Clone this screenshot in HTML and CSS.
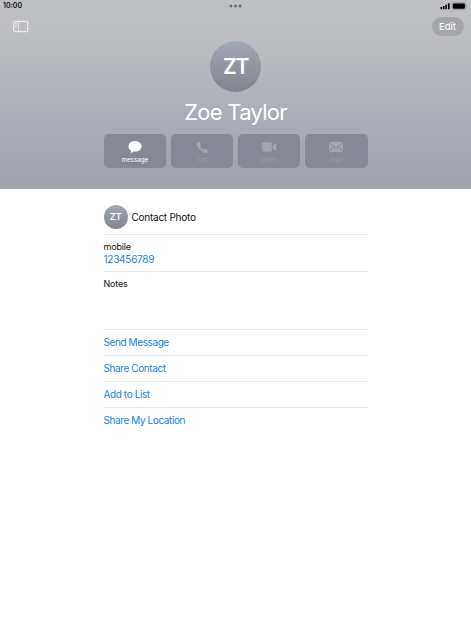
FILE: index.html
```html
<!DOCTYPE html>
<html lang="en">
<head>
  <meta charset="UTF-8" />
  <title>Zoe Taylor</title>
  <link rel="stylesheet" href="styles.css">
</head>
<body>

  <header class="header">
    <div class="status-bar">
      <span class="time">10:00</span>
      <svg class="dots" width="13" height="4" viewBox="0 0 13 4">
        <circle cx="2" cy="2" r="1.5" /><circle cx="6.5" cy="2" r="1.5" /><circle cx="11" cy="2" r="1.5" />
      </svg>
      <svg class="status-icons" width="28" height="8" viewBox="0 0 28 8">
        <path d="M.5 5h1.600v2.200H.5zM2.900 4h1.600v3.200H2.900zM5.300 2.700h1.600v4.500H5.300zM7.900 1.200h1.700v6H7.900z" />
        <rect x="12.2" y=".9" width="13.4" height="6.4" rx="1.8" fill="none" stroke="#77787c" stroke-width=".7" />
        <rect x="12.900" y="1.500" width="12" height="5.200" rx="1.1" />
        <path d="M26.3 3v2q.8-.3.8-1t-.8-1z" fill="#77787c" />
      </svg>
    </div>

    <div class="toolbar">
      <svg class="sidebar-icon" width="16" height="13" viewBox="0 0 16 13">
        <rect x=".8" y="1.300" width="14" height="10.4" rx="1" />
        <path d="M5.600 1.300v10.400M2.200 3.500h2M2.200 5.200h2M2.200 6.900h2" />
      </svg>
      <button class="edit-btn">Edit</button>
    </div>

    <div class="avatar">ZT</div>
    <h1 class="name">Zoe Taylor</h1>

    <div class="actions">
      <button class="action">
        <svg width="16" height="14" viewBox="0 0 16 14">
          <path d="M8 1C4.200 1 1.400 3.300 1.400 6.300c0 1.900 1 3.500 2.700 4.400 0 .9-.5 1.600-1 2.100 1.500 0 2.800-.6 3.600-1.300.4.1.9.1 1.300.1 3.800 0 6.600-2.300 6.600-5.300S11.800 1 8 1z" />
        </svg>
        <span>message</span>
      </button>
      <button class="action disabled">
        <svg width="16" height="14" viewBox="0 0 16 14">
          <path d="M3.500 2.200c.9-.9 1.700-.7 2.200 0l1.200 1.800c.4.6.3 1.100-.2 1.600-.6.6-.6.8-.2 1.400.6.900 1.300 1.600 2.200 2.200.6.4.8.4 1.300-.1.5-.6 1-.6 1.600-.2l1.700 1.200c.8.6.8 1.300 0 2.100-1.300 1.300-3.300.9-6-1.500C4.200 8.100 2.700 6.100 2.600 4.300c0-.8.300-1.500.9-2.100z" />
        </svg>
        <span>call</span>
      </button>
      <button class="action disabled">
        <svg width="16" height="14" viewBox="0 0 16 14">
          <rect x=".9" y="2.200" width="10" height="9.600" rx="1.800" />
          <path d="M11.700 5.600l2.700-2.200c.4-.3.8-.1.800.4v6.400c0 .5-.4.700-.8.400l-2.700-2.200z" />
        </svg>
        <span>video</span>
      </button>
      <button class="action disabled">
        <svg width="16" height="14" viewBox="0 0 16 14">
          <rect x="1" y="2" width="14" height="10" rx="1.600" />
          <path class="fold" d="M1.300 2.500l5.700 5.200q1 .8 2 0l5.700-5.200M1.500 11.500l4.400-4.400M14.500 11.500l-4.400-4.400" />
        </svg>
        <span>mail</span>
      </button>
    </div>
  </header>

  <main class="details">
    <div class="row photo-row">
      <div class="avatar avatar-small">ZT</div>
      <span>Contact Photo</span>
    </div>
    <div class="row phone-row">
      <div class="label">mobile</div>
      <a class="phone">123456789</a>
    </div>
    <div class="row notes-row">
      <div class="label">Notes</div>
    </div>
    <a class="row link-row">Send Message</a>
    <a class="row link-row">Share Contact</a>
    <a class="row link-row">Add to List</a>
    <a class="row link-row">Share My Location</a>
  </main>

</body>
</html>
```
FILE: styles.css
```css
* {
  box-sizing: border-box;
}

body {
  margin: 0;
  background: #fff;
  color: #111;
  font-family: Inter, "Liberation Sans", sans-serif;
  font-size: 10px;
}

button {
  padding: 0;
  border: none;
  font-family: inherit;
  color: #fff;
}

.header {
  display: flex;
  flex-direction: column;
  align-items: center;
  height: 189px;
  background: linear-gradient(#c0c1c4, #bbbcc0 28%, #a9abb6 65%, #a0a3ad);
}

.status-bar {
  display: grid;
  grid-template-columns: 1fr auto 1fr;
  align-items: center;
  width: 100%;
  height: 12px;
  padding: 0 3px;
}

.time {
  font-size: 7px;
  font-weight: 600;
  line-height: 12px;
}

.dots {
  fill: #707176;
}

.status-icons {
  justify-self: end;
}

.toolbar {
  display: flex;
  justify-content: space-between;
  align-items: center;
  width: 100%;
  height: 20px;
  margin-top: 4px;
  padding: 0 7.5px 0 12.5px;
}

.sidebar-icon {
  fill: none;
  stroke: #f4f4f6;
  stroke-width: 1;
}

.sidebar-icon path {
  stroke-width: .7;
}

.edit-btn {
  width: 32px;
  height: 19px;
  border-radius: 10px;
  background: #a5a6aa;
  font-size: 9.5px;
}

.avatar {
  display: flex;
  justify-content: center;
  align-items: center;
  flex-shrink: 0;
  width: 51px;
  height: 51px;
  margin-top: 4.5px;
  border-radius: 50%;
  background: linear-gradient(#a3a8b5, #80848d);
  color: #fff;
  font-size: 21px;
  font-weight: 600;
  letter-spacing: -1.2px;
}

.name {
  margin: 6.5px 0 0;
  color: #fff;
  font-size: 22px;
  font-weight: 400;
  line-height: 28px;
  letter-spacing: -.75px;
}

.actions {
  display: flex;
  gap: 4.5px;
  width: 264px;
  margin-top: 8px;
}

.action {
  display: flex;
  flex-direction: column;
  align-items: center;
  flex: 1;
  height: 34px;
  padding-top: 6px;
  border-radius: 5px;
  background: #868896;
  font-size: 6.2px;
  line-height: 11px;
}

.action svg {
  fill: currentColor;
}

.disabled {
  color: #a2a4af;
}

.disabled span {
  color: #999ba7;
}

.fold {
  fill: none;
  stroke: #868896;
  stroke-width: .9;
}

.details {
  width: 264px;
  margin: 0 auto;
  letter-spacing: -.25px;
}

.row {
  display: block;
  border-bottom: 1px solid #e9e9eb;
}

.photo-row {
  display: flex;
  align-items: center;
  gap: 4px;
  height: 46px;
  padding-top: 10px;
}

.avatar-small {
  width: 24px;
  height: 24px;
  margin: 0;
  font-size: 9.5px;
  font-weight: 500;
  letter-spacing: -.4px;
}

.phone-row {
  height: 37px;
  padding-top: 5px;
}

.label {
  font-size: 9px;
  line-height: 13px;
  letter-spacing: -.2px;
}

.phone {
  display: block;
  color: #1784dc;
  line-height: 13px;
}

.notes-row {
  height: 58px;
  padding-top: 5px;
}

.link-row {
  height: 26px;
  color: #1784dc;
  line-height: 25px;
  letter-spacing: -.4px;
}

.link-row:last-child {
  border-bottom: none;
}
```
